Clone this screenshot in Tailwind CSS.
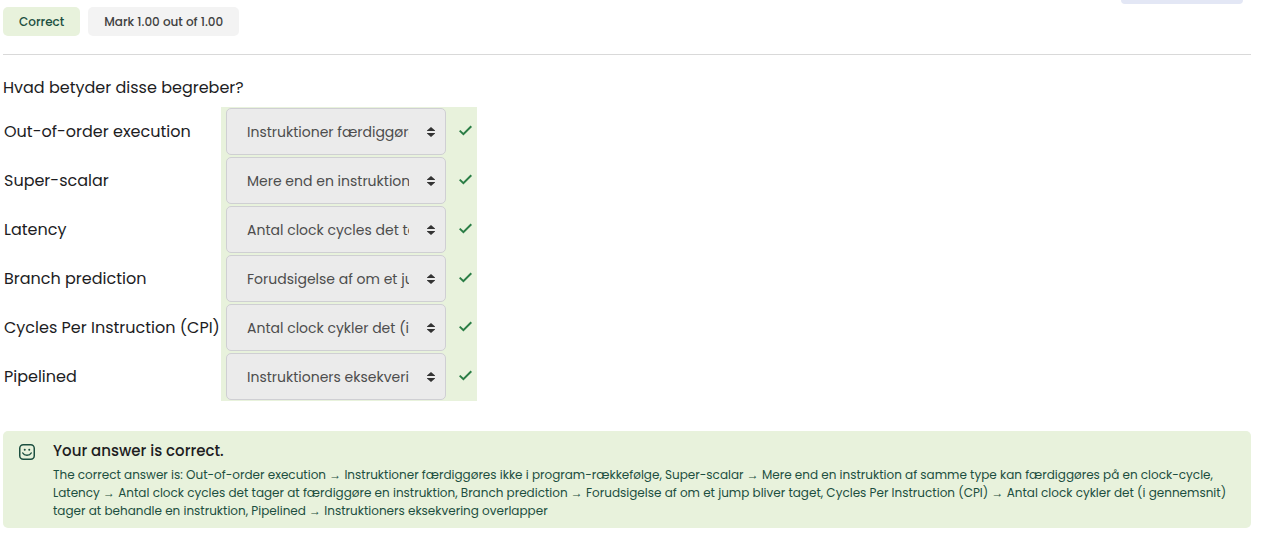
<!DOCTYPE html>
<html lang="da">
<head>
<meta charset="utf-8">
<meta name="viewport" content="width=device-width, initial-scale=1">
<title>Quiz</title>
<script src="https://cdn.jsdelivr.net/npm/@tailwindcss/browser@4"></script>
</head>
<body class="bg-white font-['Poppins','Liberation_Serif',sans-serif] text-[#1d1d1f]">
<svg class="hidden">
  <symbol id="sort" viewBox="0 0 8 10"><path d="M4 0 8 3.5V4H0v-.5zM0 6h8v.5L4 10 0 6.5z" fill="currentColor"/></symbol>
  <symbol id="check" viewBox="0 0 13 11"><path d="M.7 5.6 4.4 9.2 12.3 1.3" fill="none" stroke="currentColor" stroke-width="2"/></symbol>
</svg>
<main class="relative pt-[7px] pl-[3px] pr-4">
  <div class="absolute top-0 right-6 h-1 w-[122px] rounded-b-md bg-[#e3e7f5]"></div>
  <div class="flex gap-2 border-b border-[#d9d9d9] pb-[18px] text-xs font-medium leading-[29px]">
    <span class="rounded-[5px] bg-[#e8f2dc] px-4 text-[#1c4f40]">Correct</span>
    <span class="rounded-[5px] bg-[#f3f3f3] px-4 text-[#404040]">Mark 1.00 out of 1.00</span>
  </div>
  <p class="mt-[21px] text-base leading-6">Hvad betyder disse begreber?</p>
  <table class="mt-[7px] border-collapse text-base leading-6">
    <tbody>
      <tr class="h-[49px]">
        <td class="w-[218px] pl-px whitespace-nowrap"><label for="q1">Out-of-order execution</label></td>
        <td class="bg-[#e8f2dc] px-[5px]"><div class="flex items-center"><div class="relative"><select id="q1" disabled class="block h-[47px] w-[220px] appearance-none rounded-[5px] border border-[#cfcfd3] bg-[#ebebeb] pl-5 pr-9 text-sm text-[#4d4d4d] opacity-100"><option>Instruktioner færdiggøres ikke i program-rækkefølge</option></select><svg class="pointer-events-none absolute top-[19px] right-[11px] h-[10px] w-2 text-[#333]"><use href="#sort"/></svg></div><svg class="mb-[2px] ml-[13px] h-[11px] w-[13px] text-[#2a7d45]" role="img" aria-label="Correct"><use href="#check"/></svg></div></td>
      </tr>
      <tr class="h-[49px]">
        <td class="pl-px whitespace-nowrap"><label for="q2">Super-scalar</label></td>
        <td class="bg-[#e8f2dc] px-[5px]"><div class="flex items-center"><div class="relative"><select id="q2" disabled class="block h-[47px] w-[220px] appearance-none rounded-[5px] border border-[#cfcfd3] bg-[#ebebeb] pl-5 pr-9 text-sm text-[#4d4d4d] opacity-100"><option>Mere end en instruktion af samme type kan færdiggøres på en clock-cycle</option></select><svg class="pointer-events-none absolute top-[19px] right-[11px] h-[10px] w-2 text-[#333]"><use href="#sort"/></svg></div><svg class="mb-[2px] ml-[13px] h-[11px] w-[13px] text-[#2a7d45]" role="img" aria-label="Correct"><use href="#check"/></svg></div></td>
      </tr>
      <tr class="h-[49px]">
        <td class="pl-px whitespace-nowrap"><label for="q3">Latency</label></td>
        <td class="bg-[#e8f2dc] px-[5px]"><div class="flex items-center"><div class="relative"><select id="q3" disabled class="block h-[47px] w-[220px] appearance-none rounded-[5px] border border-[#cfcfd3] bg-[#ebebeb] pl-5 pr-9 text-sm text-[#4d4d4d] opacity-100"><option>Antal clock cycles det tager at færdiggøre en instruktion</option></select><svg class="pointer-events-none absolute top-[19px] right-[11px] h-[10px] w-2 text-[#333]"><use href="#sort"/></svg></div><svg class="mb-[2px] ml-[13px] h-[11px] w-[13px] text-[#2a7d45]" role="img" aria-label="Correct"><use href="#check"/></svg></div></td>
      </tr>
      <tr class="h-[49px]">
        <td class="pl-px whitespace-nowrap"><label for="q4">Branch prediction</label></td>
        <td class="bg-[#e8f2dc] px-[5px]"><div class="flex items-center"><div class="relative"><select id="q4" disabled class="block h-[47px] w-[220px] appearance-none rounded-[5px] border border-[#cfcfd3] bg-[#ebebeb] pl-5 pr-9 text-sm text-[#4d4d4d] opacity-100"><option>Forudsigelse af om et jump bliver taget</option></select><svg class="pointer-events-none absolute top-[19px] right-[11px] h-[10px] w-2 text-[#333]"><use href="#sort"/></svg></div><svg class="mb-[2px] ml-[13px] h-[11px] w-[13px] text-[#2a7d45]" role="img" aria-label="Correct"><use href="#check"/></svg></div></td>
      </tr>
      <tr class="h-[49px]">
        <td class="pl-px whitespace-nowrap"><label for="q5">Cycles Per Instruction (CPI)</label></td>
        <td class="bg-[#e8f2dc] px-[5px]"><div class="flex items-center"><div class="relative"><select id="q5" disabled class="block h-[47px] w-[220px] appearance-none rounded-[5px] border border-[#cfcfd3] bg-[#ebebeb] pl-5 pr-9 text-sm text-[#4d4d4d] opacity-100"><option>Antal clock cykler det (i gennemsnit) tager at behandle en instruktion</option></select><svg class="pointer-events-none absolute top-[19px] right-[11px] h-[10px] w-2 text-[#333]"><use href="#sort"/></svg></div><svg class="mb-[2px] ml-[13px] h-[11px] w-[13px] text-[#2a7d45]" role="img" aria-label="Correct"><use href="#check"/></svg></div></td>
      </tr>
      <tr class="h-[49px]">
        <td class="pl-px whitespace-nowrap"><label for="q6">Pipelined</label></td>
        <td class="bg-[#e8f2dc] px-[5px]"><div class="flex items-center"><div class="relative"><select id="q6" disabled class="block h-[47px] w-[220px] appearance-none rounded-[5px] border border-[#cfcfd3] bg-[#ebebeb] pl-5 pr-9 text-sm text-[#4d4d4d] opacity-100"><option>Instruktioners eksekvering overlapper</option></select><svg class="pointer-events-none absolute top-[19px] right-[11px] h-[10px] w-2 text-[#333]"><use href="#sort"/></svg></div><svg class="mb-[2px] ml-[13px] h-[11px] w-[13px] text-[#2a7d45]" role="img" aria-label="Correct"><use href="#check"/></svg></div></td>
      </tr>
    </tbody>
  </table>
  <section class="mt-[30px] flex gap-[18px] rounded-[5px] bg-[#e8f2dc] px-4 py-2 text-[#1c4f40]">
    <svg class="mt-[5px] h-4 w-4 shrink-0" viewBox="0 0 16 16" fill="none" stroke="currentColor" stroke-width="1.5" stroke-linecap="round"><rect x=".75" y=".75" width="14.5" height="14.5" rx="3.5"/><path d="M5.7 5.7h.1M10.2 5.7h.1" stroke-width="1.9"/><path d="M3.8 9c1.6 3 6.8 3 8.4 0"/></svg>
    <div>
      <h2 class="text-[15px] font-medium leading-6 text-[#1d1d1f]">Your answer is correct.</h2>
      <p class="mt-[3px] text-xs leading-[18px]">The correct answer is: Out-of-order execution → Instruktioner færdiggøres ikke i program-rækkefølge, Super-scalar → Mere end en instruktion af samme type kan færdiggøres på en clock-cycle, Latency → Antal clock cycles det tager at færdiggøre en instruktion, Branch prediction → Forudsigelse af om et jump bliver taget, Cycles Per Instruction (CPI) → Antal clock cykler det (i gennemsnit) tager at behandle en instruktion, Pipelined → Instruktioners eksekvering overlapper</p>
    </div>
  </section>
</main>
</body>
</html>
